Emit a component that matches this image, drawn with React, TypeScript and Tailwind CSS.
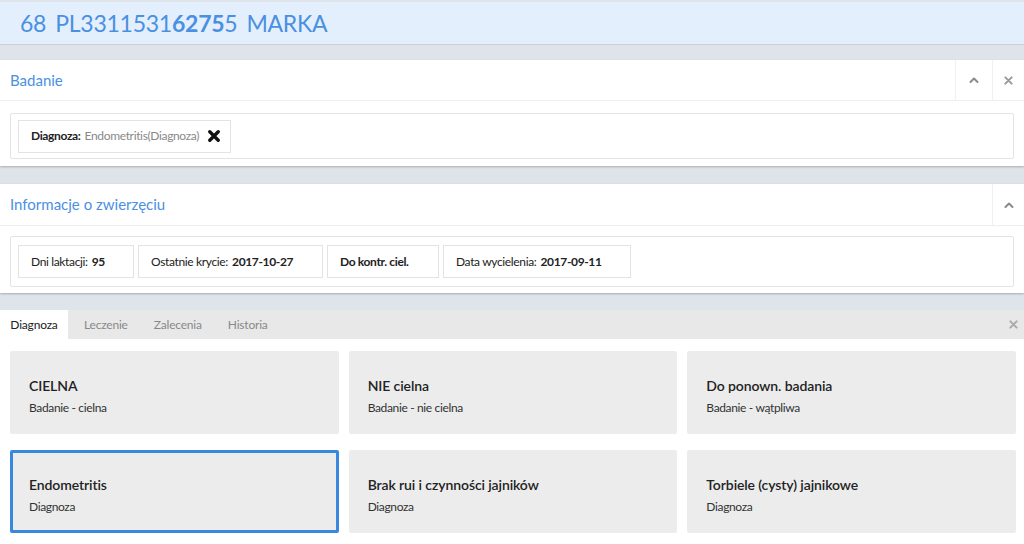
import React from "react";

const ChevronUp = () => (
  <svg width="12" height="12" viewBox="0 0 12 12" fill="none">
    <path d="M2.5 8 L6 4.5 L9.5 8" stroke="#8a8a8a" strokeWidth="2" strokeLinecap="round" strokeLinejoin="round" />
  </svg>
);

const SmallX = ({ color = "#9a9a9a", size = 9, w = 2.2 }: { color?: string; size?: number; w?: number }) => (
  <svg width={size} height={size} viewBox="0 0 10 10" fill="none">
    <path d="M1.5 1.5 L8.5 8.5 M8.5 1.5 L1.5 8.5" stroke={color} strokeWidth={w} strokeLinecap="round" />
  </svg>
);

const App = () => {
  const cards = [
    { title: "CIELNA", sub: "Badanie - cielna" },
    { title: "NIE cielna", sub: "Badanie - nie cielna" },
    { title: "Do ponown. badania", sub: "Badanie - wątpliwa" },
    { title: "Endometritis", sub: "Diagnoza", active: true },
    { title: "Brak rui i czynności jajników", sub: "Diagnoza" },
    { title: "Torbiele (cysty) jajnikowe", sub: "Diagnoza" },
  ];

  const chip = "h-[33px] flex items-center px-3 border border-[#e3e3e3] text-[12px] tracking-[-0.35px] text-[#222]";

  return (
    <div className="w-[1024px] h-[544px] overflow-hidden bg-[#dfe4ea] font-['Lato','Noto_Sans',sans-serif]">
      {/* Header */}
      <div className="mt-[2px] h-[43px] bg-[#e3effc] border-b border-[#c9d0d8] flex items-center px-5 text-[23px] tracking-[-0.25px] text-[#4a90e2]">
        <span>68</span>
        <span className="ml-[9px]">
          PL3311531<b className="font-bold">6275</b>5
        </span>
        <span className="ml-[9px]">MARKA</span>
      </div>

      {/* Badanie */}
      <div className="mt-[15px] bg-white shadow-[0_1px_2px_rgba(0,0,0,0.25)]">
        <div className="h-[41px] flex items-stretch border-b border-[#eeeeee]">
          <div className="flex-1 flex items-center px-[10px] text-[15px] text-[#4a90e2]">Badanie</div>
          <div className="w-[37px] border-l border-[#f0f0f0] flex items-center justify-center">
            <ChevronUp />
          </div>
          <div className="w-[32px] border-l border-[#f0f0f0] flex items-center justify-center">
            <SmallX />
          </div>
        </div>
        <div className="px-[10px] pt-[12px] pb-[7px]">
          <div className="h-[46px] border border-[#e3e3e3] rounded-[2px] flex items-center px-[7px]">
            <div className={`w-[213px] ${chip}`}>
              <b>Diagnoza:</b>
              <span className="ml-1 text-[#888]">Endometritis(Diagnoza)</span>
              <span className="ml-[9px] flex">
                <SmallX color="#111" size={12} w={2.8} />
              </span>
            </div>
          </div>
        </div>
      </div>

      {/* Informacje */}
      <div className="mt-[18px] bg-white shadow-[0_1px_2px_rgba(0,0,0,0.25)]">
        <div className="h-[42px] flex items-stretch border-b border-[#eeeeee]">
          <div className="flex-1 flex items-center px-[10px] text-[15px] text-[#4a90e2]">Informacje o zwierzęciu</div>
          <div className="w-[32px] border-l border-[#f0f0f0] flex items-center justify-center">
            <ChevronUp />
          </div>
        </div>
        <div className="px-[10px] pt-[10px] pb-[6px]">
          <div className="h-[51px] border border-[#e3e3e3] rounded-[2px] flex items-center gap-[4px] px-[7px]">
            <div className={`w-[116px] ${chip}`}>
              Dni laktacji:<b className="ml-1">95</b>
            </div>
            <div className={`w-[185px] ${chip}`}>
              Ostatnie krycie:<b className="ml-1">2017-10-27</b>
            </div>
            <div className={`w-[112px] ${chip}`}>
              <b>Do kontr. ciel.</b>
            </div>
            <div className={`w-[188px] ${chip}`}>
              Data wycielenia:<b className="ml-1">2017-09-11</b>
            </div>
          </div>
        </div>
      </div>

      {/* Tabs */}
      <div className="mt-[17px] bg-white">
        <div className="h-[29px] bg-[#e8e8e8] flex items-stretch text-[12px] tracking-[-0.2px]">
          <div className="w-[68px] bg-white flex items-center justify-center text-[#222]">Diagnoza</div>
          <div className="px-[16px] flex items-center text-[#888]">Leczenie</div>
          <div className="px-[10px] flex items-center text-[#888]">Zalecenia</div>
          <div className="px-[16px] flex items-center text-[#888]">Historia</div>
          <div className="flex-1" />
          <div className="w-[22px] flex items-center justify-center">
            <SmallX color="#aaa" size={9} />
          </div>
        </div>
        <div className="grid grid-cols-3 gap-x-[10px] gap-y-[16px] pl-[10px] pr-[8px] pt-[12px] pb-[12px]">
          {cards.map((c, i) => (
            <div
              key={i}
              className={`h-[83px] rounded-[2px] bg-[#ececec] flex flex-col ${
                c.active ? "border-[3px] border-[#3a87e0] pl-[16px] pt-[23px]" : "pl-[19px] pt-[26px]"
              }`}
            >
              <div className="text-[14px] tracking-[-0.1px] font-semibold text-[#222] leading-[18px]">{c.title}</div>
              <div className="text-[12px] tracking-[-0.35px] text-[#333] mt-[5px] leading-[15px]">{c.sub}</div>
            </div>
          ))}
        </div>
      </div>
    </div>
  );
};

export default App;
